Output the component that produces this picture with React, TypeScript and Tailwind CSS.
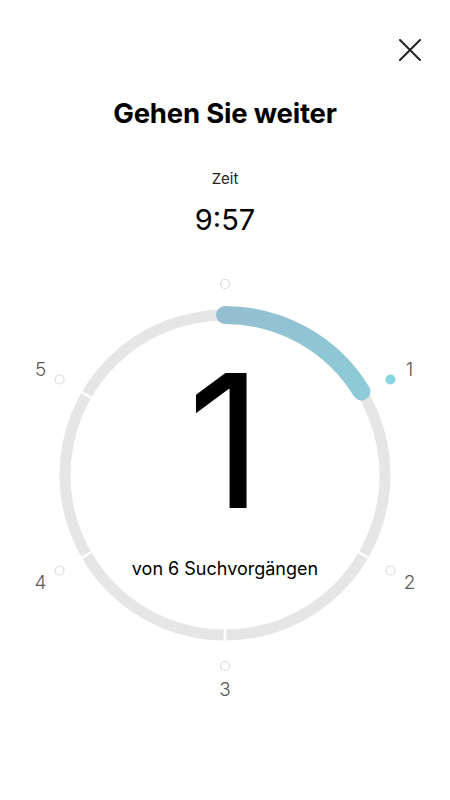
const CX = 225;
const CY = 215;
const RING_R = 160;
const DOT_R = 191;
const LABEL_R = 213;

function polar(r: number, deg: number) {
  const a = (deg * Math.PI) / 180;
  return { x: CX + r * Math.sin(a), y: CY - r * Math.cos(a) };
}

const markers = [
  { deg: 0, label: "" },
  { deg: 60, label: "1", active: true },
  { deg: 120, label: "2" },
  { deg: 180, label: "3" },
  { deg: 240, label: "4" },
  { deg: 300, label: "5" },
];

function Dial() {
  const start = polar(RING_R, 0);
  const end = polar(RING_R, 58.5);
  return (
    <svg width={450} height={450} viewBox="0 0 450 450" className="block">
      <defs>
        <linearGradient id="prog" x1="0" y1="0" x2="1" y2="1">
          <stop offset="0%" stopColor="#94bfd0" />
          <stop offset="100%" stopColor="#8ccbd7" />
        </linearGradient>
      </defs>
      <circle cx={CX} cy={CY} r={RING_R} fill="none" stroke="#e6e6e6" strokeWidth={11} />
      {markers.map((m) => {
        const a = polar(RING_R - 8, m.deg);
        const b = polar(RING_R + 8, m.deg);
        return <line key={m.deg} x1={a.x} y1={a.y} x2={b.x} y2={b.y} stroke="#fff" strokeWidth={2.5} />;
      })}
      <path
        d={`M ${start.x} ${start.y} A ${RING_R} ${RING_R} 0 0 1 ${end.x} ${end.y}`}
        fill="none"
        stroke="url(#prog)"
        strokeWidth={18}
        strokeLinecap="round"
      />
      {markers.map((m) => {
        const d = polar(DOT_R, m.deg);
        return m.active ? (
          <circle key={m.deg} cx={d.x} cy={d.y} r={5} fill="#88d6e3" />
        ) : (
          <circle key={m.deg} cx={d.x} cy={d.y} r={4.5} fill="#fff" stroke="#dcdcdc" strokeWidth={1.2} />
        );
      })}
      {markers
        .filter((m) => m.label)
        .map((m) => {
          const l = polar(LABEL_R, m.deg);
          return (
            <text
              key={m.deg}
              x={l.x}
              y={l.y + 1}
              textAnchor="middle"
              dominantBaseline="central"
              fill="#5a5a5a"
              fontSize={19}
              fontFamily="Inter, 'Liberation Sans', sans-serif"
              fontWeight={300}
            >
              {m.label}
            </text>
          );
        })}
    </svg>
  );
}

export default function App() {
  return (
    <div className="flex min-h-[800px] w-full flex-col items-center bg-white font-['Inter','Liberation_Sans',sans-serif] text-black">
      <div className="flex w-full justify-end pr-[29px] pt-[39px]">
        <button aria-label="Schließen" className="h-[22px] w-[22px] text-[#222]">
          <svg viewBox="0 0 22 22" width={22} height={22}>
            <path d="M1 1 L21 21 M21 1 L1 21" stroke="currentColor" strokeWidth={2} strokeLinecap="round" fill="none" />
          </svg>
        </button>
      </div>
      <h1 className="mt-[35px] text-[27.5px] font-bold leading-[34px] tracking-[-0.2px]">Gehen Sie weiter</h1>
      <p className="mt-[39px] text-[15px] leading-[20px] text-[#222]">Zeit</p>
      <p className="mt-[13px] text-[29px] leading-[36px]">9:57</p>
      <div className="relative mt-[22px] h-[450px] w-[450px]">
        <Dial />
        <div className="absolute left-0 right-0 top-[88px] text-center text-[186px] leading-none font-normal">1</div>
        <div className="absolute left-0 right-0 top-[297px] text-center text-[18px] leading-[24px]">von 6 Suchvorgängen</div>
      </div>
    </div>
  );
}
